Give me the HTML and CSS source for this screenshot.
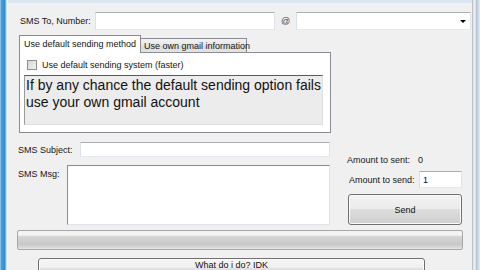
FILE: index.html
```html
<!DOCTYPE html>
<html>
<head>
<meta charset="utf-8">
<link rel="stylesheet" href="styles.css">
</head>
<body>
<div class="window">
  <div class="frame-left"></div>
  <div class="form">
    <div class="row-to">
      <span class="lbl lbl-to">SMS To, Number:</span>
      <div class="tb tb-number"></div>
      <span class="at">@</span>
      <div class="tb combo"><span class="arrow"></span></div>
    </div>
    <div class="tabs">
      <div class="tab-strip">
        <div class="tab active">Use default sending method</div>
        <div class="tab inactive">Use own gmail information</div>
      </div>
      <div class="tab-page">
        <div class="chk-row"><span class="chk"></span><span>Use default sending system (faster)</span></div>
        <div class="info">If by any chance the default sending option fails use your own gmail account</div>
      </div>
    </div>
    <div class="mid">
      <div class="left">
        <div class="row-subj"><span class="lbl lbl-subj">SMS Subject:</span><div class="tb tb-subj"></div></div>
        <div class="row-msg"><span class="lbl lbl-msg">SMS Msg:</span><div class="tb tb-msg"></div></div>
      </div>
      <div class="right">
        <div class="row-sent"><span class="lbl lbl-sent">Amount to sent:</span><span>0</span></div>
        <div class="row-send"><span class="lbl lbl-send">Amount to send:</span><div class="tb tb-amt">1</div></div>
        <div class="btn btn-send">Send</div>
      </div>
    </div>
    <div class="progress"></div>
    <div class="btn btn-what">What do i do? IDK</div>
  </div>
  <div class="frame-right"></div>
</div>
</body>
</html>
```

FILE: styles.css
```css
html, body {
  margin: 0;
  padding: 0;
  background: #f0f0f0;
}
.window {
  display: flex;
  width: 480px;
  height: 270px;
  overflow: hidden;
  font-family: "Liberation Sans", Arial, sans-serif;
  font-size: 9px;
  color: #151515;
}
.frame-left {
  width: 8px;
  flex: none;
  background: linear-gradient(to right, #a9cbe8 0px, #4a9ed8 1.5px, #2d8fd2 4.5px, #9cc4e4 6px, #eef3f8 7px, #f7f9fb 8px);
}
.frame-right {
  width: 8px;
  flex: none;
  background: linear-gradient(to right, #9a9a9a 0px, #dfe4ea 1px, #e9eef4 3px, #b8c7d8 4.5px, #c9d6e4 6px, #e6edf5 8px);
}
.form {
  flex: 1;
  background: #f0f0f0;
  border-top: 3px solid #dce6f0;
  padding-top: 9px;
  box-sizing: border-box;
  height: 270px;
}
.tb {
  box-sizing: border-box;
  background: #fff;
  border: 1px solid #e2e3ea;
  border-top-color: #abadb3;
  border-left-color: #dbdfe6;
  border-bottom-color: #e3e9ef;
}
.row-to {
  display: flex;
  align-items: center;
  height: 18px;
  margin-left: 12px;
}
.lbl-to { width: 75px; }
.tb-number { width: 180px; height: 18px; }
.at { width: 21px; text-align: center; color: #444; }
.combo {
  width: 175px;
  height: 18px;
  display: flex;
  align-items: center;
  justify-content: flex-end;
  padding-right: 4px;
}
.arrow {
  width: 0;
  height: 0;
  border-left: 3px solid transparent;
  border-right: 3px solid transparent;
  border-top: 3px solid #000;
}
.tabs {
  margin: 5px 0 0 11px;
  width: 312px;
}
.tab-strip {
  display: flex;
  align-items: flex-end;
  height: 17px;
}
.tab {
  box-sizing: border-box;
  border: 1px solid #898c95;
  border-bottom: none;
  display: flex;
  align-items: center;
  padding-left: 4px;
  white-space: nowrap;
}
.tab.active {
  width: 122px;
  height: 18px;
  margin-bottom: -1px;
  background: #fff;
  position: relative;
  padding-left: 4px;
  padding-bottom: 1px;
}
.tab.inactive {
  width: 106px;
  height: 14px;
  border-left: none;
  background: linear-gradient(#f3f3f3, #e6e6e6 50%, #dadada 51%, #e4e4e4);
  padding-left: 3px;
}
.tab-page {
  box-sizing: border-box;
  height: 81px;
  border: 1px solid #898c95;
  background: #fff;
}
.chk-row {
  display: flex;
  align-items: center;
  height: 11px;
  margin: 6px 0 0 7px;
}
.chk {
  box-sizing: border-box;
  width: 10px;
  height: 10px;
  border: 1px solid #8e8f8f;
  background: linear-gradient(135deg, #d6d6d6, #f2f2f2);
  margin-right: 5px;
}
.info {
  box-sizing: border-box;
  margin: 5px 0 0 4px;
  width: 299px;
  height: 50px;
  border: 1px solid #e0e0e0;
  border-top-color: #5a5a5a;
  border-left-color: #9a9a9a;
  background: #ececec;
  font-size: 14px;
  line-height: 17px;
  padding: 1px 1px;
  color: #111;
}
.mid {
  display: flex;
  margin-top: 9px;
}
.left {
  margin-left: 10px;
  width: 312px;
}
.row-subj {
  display: flex;
  align-items: center;
  height: 15px;
}
.lbl-subj { width: 62px; }
.tb-subj { flex: 1; height: 15px; }
.row-msg {
  display: flex;
  margin-top: 8px;
}
.lbl-msg { width: 49px; padding-top: 4px; }
.tb-msg {
  width: 263px;
  height: 60px;
  border-color: #e2e3ea;
  border-top-color: #8a8a8a;
  border-left-color: #8e8e8e;
}
.right {
  margin-left: 17px;
  width: 116px;
  padding-top: 12px;
}
.row-sent {
  display: flex;
  align-items: center;
  height: 12px;
}
.lbl-sent { width: 71px; }
.row-send {
  display: flex;
  align-items: center;
  height: 17px;
  margin-top: 5px;
  margin-left: 2px;
}
.lbl-send { width: 70px; }
.tb-amt {
  width: 43px;
  height: 17px;
  padding-left: 3px;
  display: flex;
  align-items: center;
}
.btn {
  box-sizing: border-box;
  border: 1px solid #707070;
  border-radius: 3px;
  background: linear-gradient(#f2f2f2 0%, #ebebeb 49%, #dddddd 50%, #cfcfcf 100%);
  box-shadow: inset 0 0 0 1px #fbfbfb;
  display: flex;
  align-items: center;
  justify-content: center;
  color: #111;
}
.btn-send {
  margin: 6px 0 0 1px;
  width: 114px;
  height: 31px;
}
.progress {
  box-sizing: border-box;
  margin: 5px 0 0 9px;
  width: 446px;
  height: 20px;
  border: 1px solid #a8a8a8;
  border-radius: 2px;
  background: linear-gradient(#f2f2f2 0%, #f4f4f4 22%, #d4d4d4 32%, #c8c8c8 75%, #d8d8d8 90%, #e6e6e6 100%);
}
.btn-what {
  margin: 8px 0 0 30px;
  width: 387px;
  height: 20px;
  align-items: flex-start;
  padding-top: 1px;
  line-height: 10px;
  background: linear-gradient(#f6f6f6 0%, #efefef 49%, #e2e2e2 50%, #d6d6d6 100%);
}
```
